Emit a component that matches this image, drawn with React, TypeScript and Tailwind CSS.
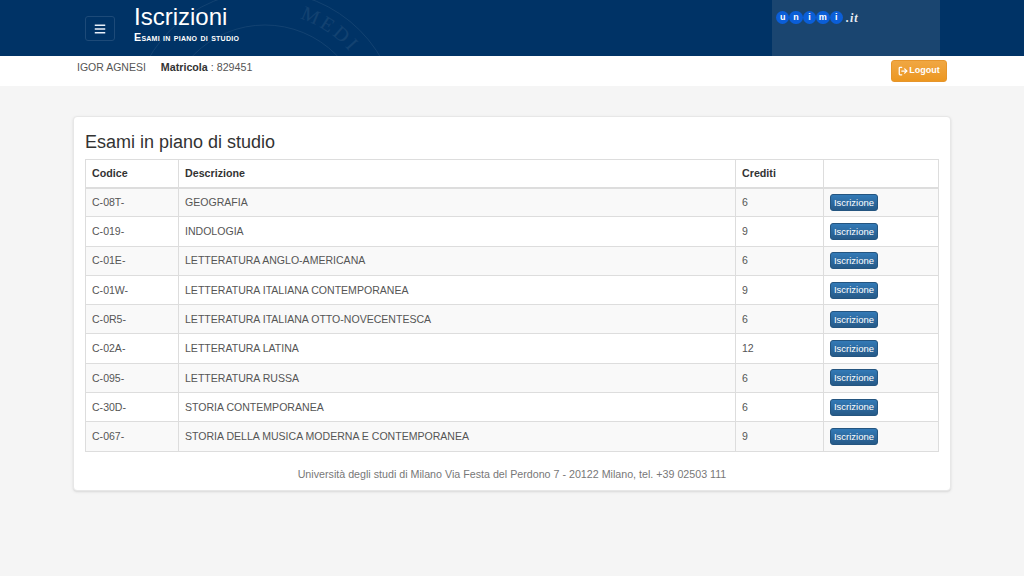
import { LogOut } from "lucide-react"
import { FaBars } from "react-icons/fa"

const exams = [
  { code: "C-08T-", name: "GEOGRAFIA", cfu: "6" },
  { code: "C-019-", name: "INDOLOGIA", cfu: "9" },
  { code: "C-01E-", name: "LETTERATURA ANGLO-AMERICANA", cfu: "6" },
  { code: "C-01W-", name: "LETTERATURA ITALIANA CONTEMPORANEA", cfu: "9" },
  { code: "C-0R5-", name: "LETTERATURA ITALIANA OTTO-NOVECENTESCA", cfu: "6" },
  { code: "C-02A-", name: "LETTERATURA LATINA", cfu: "12" },
  { code: "C-095-", name: "LETTERATURA RUSSA", cfu: "6" },
  { code: "C-30D-", name: "STORIA CONTEMPORANEA", cfu: "6" },
  { code: "C-067-", name: "STORIA DELLA MUSICA MODERNA E CONTEMPORANEA", cfu: "9" },
]

function Seal() {
  return (
    <svg className="absolute left-[150px] top-0 opacity-[0.07]" width="240" height="56" viewBox="0 0 240 56" fill="none" stroke="#ffffff">
      <circle cx="115" cy="125" r="134" strokeWidth="1" />
      <circle cx="115" cy="125" r="100" strokeWidth="1" />
      <path id="sealArc" d="M 3 125 A 112 112 0 0 1 227 125" stroke="none" />
      <text fill="#ffffff" stroke="none" fontSize="20" letterSpacing="3" fontFamily="Liberation Serif, serif">
        <textPath href="#sealArc" startOffset="60%">MEDI</textPath>
      </text>
    </svg>
  )
}

function Logo() {
  return (
    <div className="ml-[4px] mt-[11px] flex items-center">
      {["u", "n", "i", "m", "i"].map((l, i) => (
        <span key={i} className="flex h-[13px] w-[13.4px] items-center justify-center rounded-full bg-[#0b5ed7] text-[9px] font-bold leading-none text-white">
          {l}
        </span>
      ))}
      <span className="ml-[3px] text-[12px] font-bold italic leading-none tracking-[1px] text-[#e8edf3]" style={{ fontFamily: "'Liberation Serif', serif" }}>
        .it
      </span>
    </div>
  )
}

export default function App() {
  return (
    <div className="min-h-[576px] bg-[#f5f5f5] text-[10.5px] text-[#555555]" style={{ fontFamily: "'Liberation Sans', Arial, sans-serif" }}>
      <div className="relative flex h-[56px] overflow-hidden bg-[#003366]">
        <Seal />
        <div className="relative ml-[85px] mt-[16px]">
          <button className="flex h-[25px] w-[30px] items-center justify-center rounded-[3px] border border-[#1d4a78] text-[#e8f0fa]">
            <FaBars size={12} />
          </button>
        </div>
        <div className="relative ml-[19px] w-[638px]">
          <h1 className="mt-[4px] text-[24px] leading-[26px] text-white">Iscrizioni</h1>
          <div className="mt-[1px] text-[10.7px] font-bold leading-[12px] tracking-[0.25px] text-white [font-variant:small-caps]">Esami in piano di studio</div>
        </div>
        <div className="relative w-[168px] bg-[#1a4570]">
          <Logo />
        </div>
      </div>

      <div className="flex h-[30px] items-start justify-between bg-white pl-[77px] pr-[77px]">
        <div className="mt-[4px] flex leading-[14px]">
          <span>IGOR AGNESI</span>
          <span className="ml-[15px] text-[10.7px]">
            <b className="text-[#333333]">Matricola</b> : 829451
          </span>
        </div>
        <button className="mt-[4px] flex h-[22px] w-[56px] items-center justify-center rounded-[3px] border border-[#e6952b] bg-gradient-to-b from-[#f0a742] to-[#ec971f] text-[9px] font-bold text-white">
          <LogOut size={10} strokeWidth={3} className="mr-[1px]" />
          Logout
        </button>
      </div>

      <div className="ml-[73px] mt-[30px] h-[375px] w-[878px] rounded-[4px] border border-[#e7e7e7] bg-white px-[11px] shadow-sm">
        <h3 className="mb-[7px] mt-[15px] text-[18px] leading-[20px] text-[#333333]">Esami in piano di studio</h3>
        <table className="w-[854px] table-fixed border-collapse text-[10.55px]">
          <thead>
            <tr className="h-[28px] text-[#333333]">
              <th className="w-[93px] border border-b-2 border-[#dddddd] pl-[6px] text-left text-[10.7px] font-bold">Codice</th>
              <th className="w-[557px] border border-b-2 border-[#dddddd] pl-[6px] text-left text-[10.7px] font-bold">Descrizione</th>
              <th className="w-[88px] border border-b-2 border-[#dddddd] pl-[6px] text-left text-[10.7px] font-bold">Crediti</th>
              <th className="border border-b-2 border-[#dddddd]"></th>
            </tr>
          </thead>
          <tbody>
            {exams.map((e, i) => (
              <tr key={e.code} className={i % 2 === 0 ? "h-[29.3px] bg-[#f9f9f9]" : "h-[29.3px] bg-white"}>
                <td className="border border-[#dddddd] pl-[6px] pt-[1px]">{e.code}</td>
                <td className="border border-[#dddddd] pl-[6px] pt-[1px]">{e.name}</td>
                <td className="border border-[#dddddd] pl-[6px] pt-[1px]">{e.cfu}</td>
                <td className="border border-[#dddddd] pl-[6px]">
                  <button className="block h-[17px] w-[48px] rounded-[3px] border border-[#245580] bg-gradient-to-b from-[#337ab7] to-[#265a88] text-[9.5px] leading-none text-white">
                    Iscrizione
                  </button>
                </td>
              </tr>
            ))}
          </tbody>
        </table>
        <p className="mt-[15px] text-center text-[10.7px] leading-[14px] text-[#777777]">
          Università degli studi di Milano Via Festa del Perdono 7 - 20122 Milano, tel. +39 02503 111
        </p>
      </div>
    </div>
  )
}
